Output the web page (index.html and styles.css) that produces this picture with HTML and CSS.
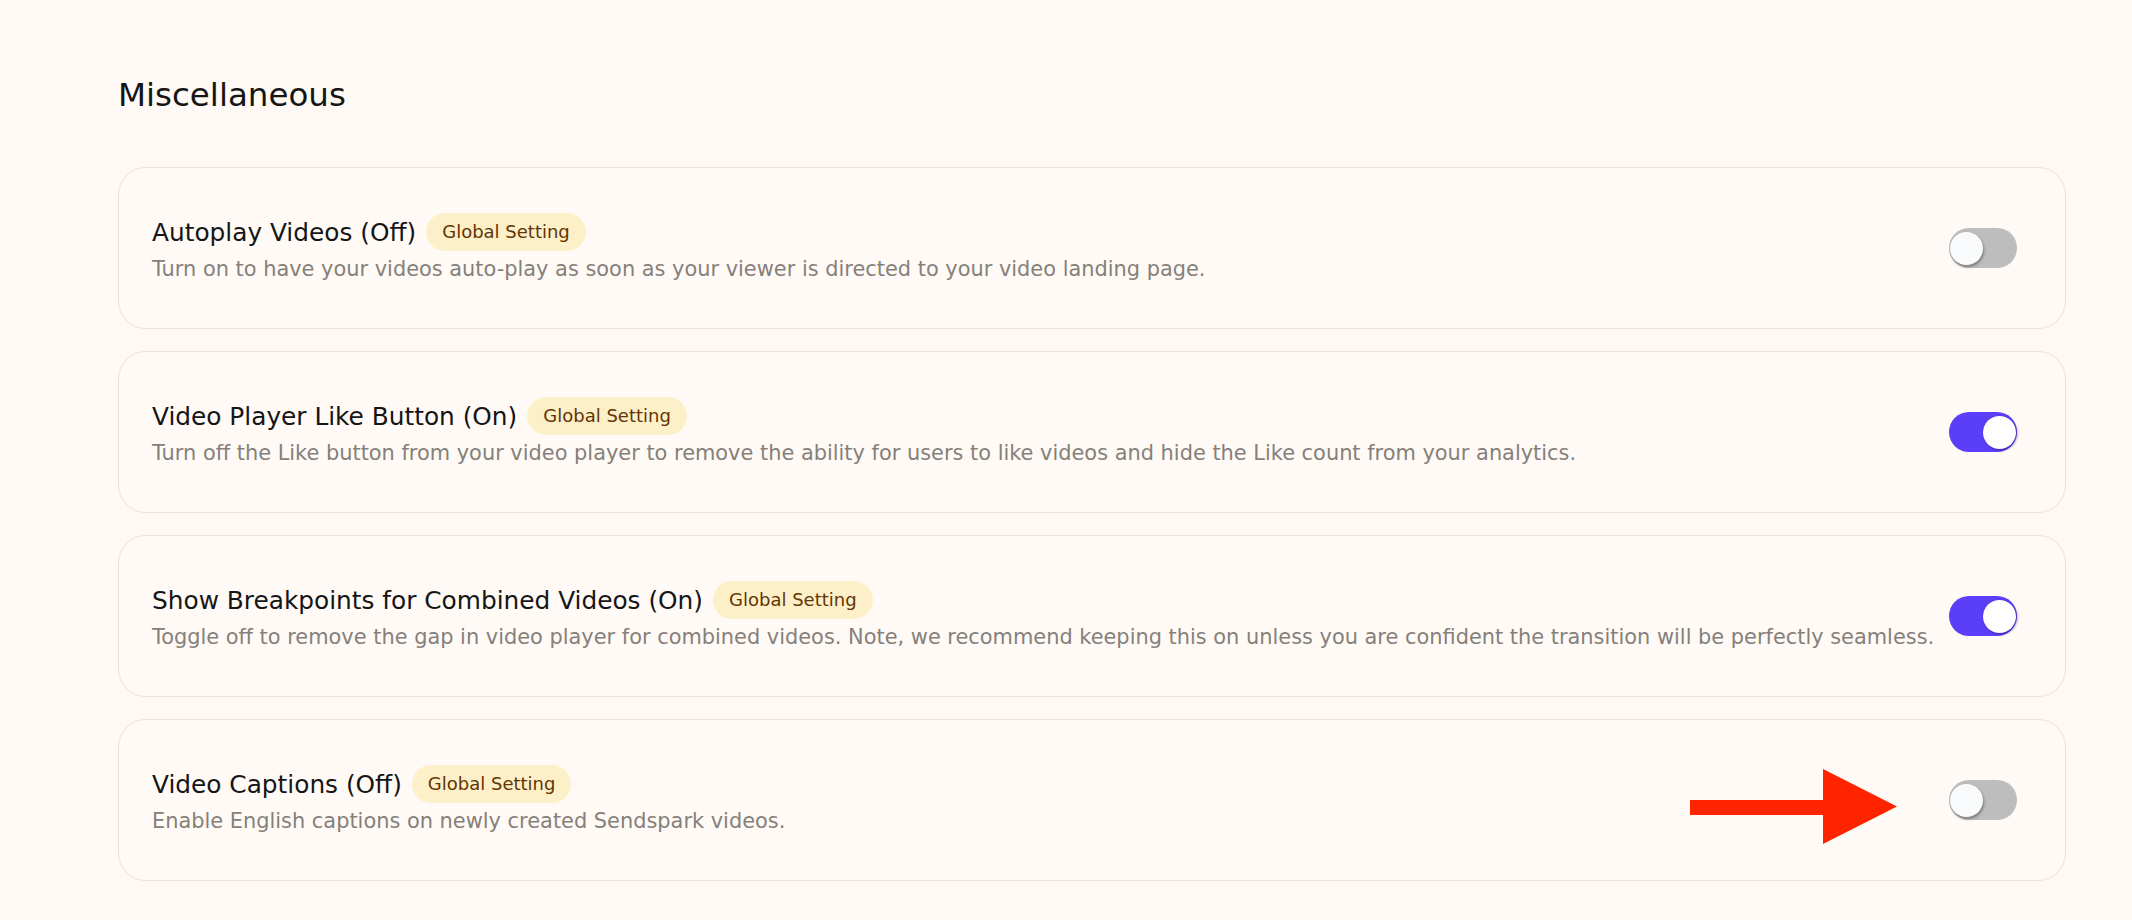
FILE: index.html
```html
<!DOCTYPE html>
<html lang="en">
<head>
  <meta charset="UTF-8">
  <title>Miscellaneous Settings</title>
  <link rel="stylesheet" href="styles.css">
</head>
<body>

  <div class="page">
    <h2 class="section-title">Miscellaneous</h2>

    <div class="settings-list">
      <div class="setting-card">
        <div class="setting-text">
          <div class="setting-head">
            <span class="setting-name">Autoplay Videos (Off)</span>
            <span class="badge">Global Setting</span>
          </div>
          <p class="setting-desc">Turn on to have your videos auto-play as soon as your viewer is directed to your video landing page.</p>
        </div>
        <label class="switch">
          <input type="checkbox">
          <span class="slider"></span>
        </label>
      </div>

      <div class="setting-card">
        <div class="setting-text">
          <div class="setting-head">
            <span class="setting-name">Video Player Like Button (On)</span>
            <span class="badge">Global Setting</span>
          </div>
          <p class="setting-desc">Turn off the Like button from your video player to remove the ability for users to like videos and hide the Like count from your analytics.</p>
        </div>
        <label class="switch">
          <input type="checkbox" checked>
          <span class="slider"></span>
        </label>
      </div>

      <div class="setting-card">
        <div class="setting-text">
          <div class="setting-head">
            <span class="setting-name">Show Breakpoints for Combined Videos (On)</span>
            <span class="badge">Global Setting</span>
          </div>
          <p class="setting-desc">Toggle off to remove the gap in video player for combined videos. Note, we recommend keeping this on unless you are confident the transition will be perfectly seamless.</p>
        </div>
        <label class="switch">
          <input type="checkbox" checked>
          <span class="slider"></span>
        </label>
      </div>

      <div class="setting-card marked">
        <div class="setting-text">
          <div class="setting-head">
            <span class="setting-name">Video Captions (Off)</span>
            <span class="badge">Global Setting</span>
          </div>
          <p class="setting-desc">Enable English captions on newly created Sendspark videos.</p>
        </div>
        <label class="switch">
          <input type="checkbox">
          <span class="slider"></span>
        </label>
        <svg class="arrow" width="207" height="75" viewBox="0 0 207 75">
          <polygon points="0,31 133,31 133,0 207,37.5 133,75 133,46 0,46" fill="#ff2400"/>
        </svg>
      </div>
    </div>
  </div>

</body>
</html>
```

FILE: styles.css
```css
body {
  margin: 0;
  font-family: "DejaVu Sans", sans-serif;
  background-color: #fef9f5;
  color: #151515;
}

.page {
  padding: 75px 66px 0 118px;
}

.section-title {
  margin: 0 0 52px 0;
  font-size: 32.5px;
  font-weight: normal;
  line-height: 40px;
}

.settings-list {
  display: flex;
  flex-direction: column;
  gap: 22px;
}

.setting-card {
  display: flex;
  align-items: center;
  height: 162px;
  box-sizing: border-box;
  padding: 0 48px 0 33px;
  border: 1px solid #e6e2dc;
  border-radius: 28px;
  background-color: #fffaf6;
}

.setting-card.marked {
  position: relative;
}

.setting-text {
  flex: 1;
}

.setting-head {
  display: flex;
  align-items: center;
  height: 38px;
}

.setting-name {
  font-size: 24.8px;
}

.badge {
  margin-left: 10px;
  padding: 0 16px;
  height: 38px;
  line-height: 38px;
  border-radius: 19px;
  background-color: #fdf0c8;
  color: #633504;
  font-size: 18px;
}

.setting-desc {
  margin: 4px 0 0 0;
  font-size: 20.9px;
  line-height: 28px;
  color: #85807a;
}

.switch {
  position: relative;
  flex: none;
  width: 68px;
  height: 40px;
  cursor: pointer;
}

.switch input {
  display: none;
}

.slider {
  position: absolute;
  inset: 0;
  border-radius: 20px;
  background-color: #bdbdbd;
}

.slider::before {
  content: "";
  position: absolute;
  top: 3.5px;
  left: 1px;
  width: 33px;
  height: 33px;
  border-radius: 50%;
  background-color: #f9fafb;
  box-shadow: 1px 2px 3px rgba(0, 0, 0, 0.35);
}

.switch input:checked + .slider {
  background-color: #5b3ff8;
}

.switch input:checked + .slider::before {
  left: 34px;
  background-color: #fff;
  box-shadow: 1px 1px 3px rgba(30, 0, 120, 0.55);
}

.arrow {
  position: absolute;
  top: 49px;
  right: 168px;
}
```
